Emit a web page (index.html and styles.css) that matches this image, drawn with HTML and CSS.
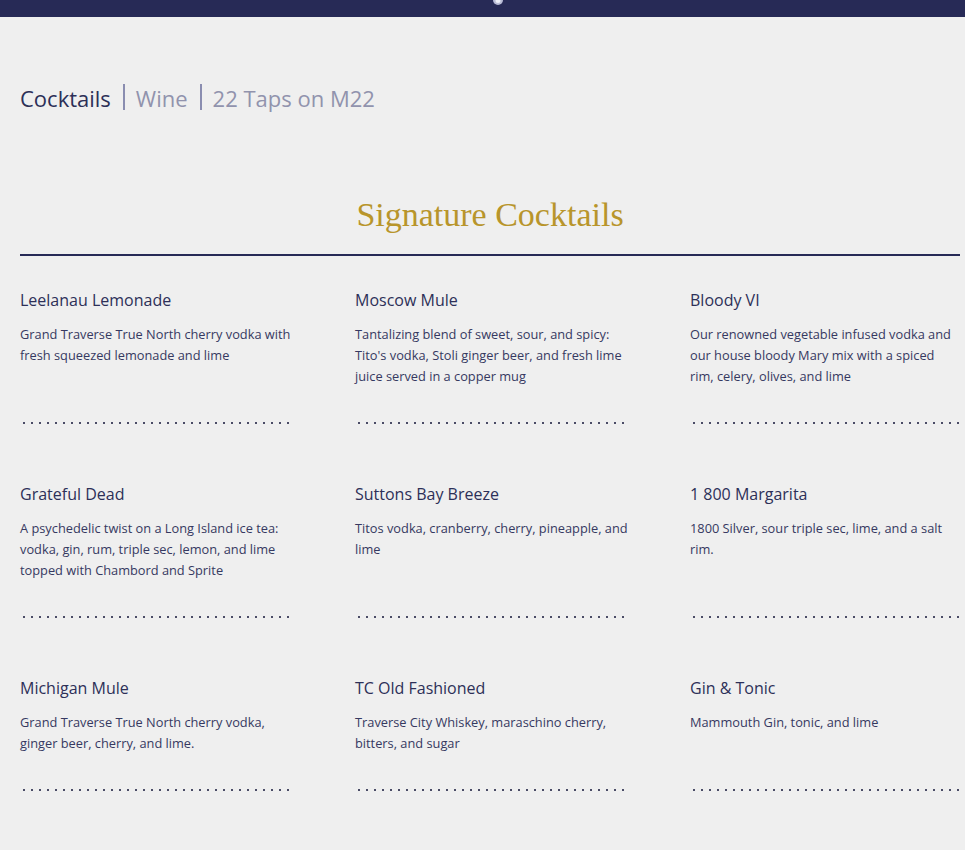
FILE: index.html
```html
<!DOCTYPE html>
<html>
<head>
<meta charset="utf-8">
<link rel="stylesheet" href="styles.css">
</head>
<body>
<header class="topbar">
  <svg class="logo" width="20" height="12" viewBox="0 0 20 12"><ellipse cx="10" cy="0" rx="5" ry="5" fill="#b9bcd6"/><ellipse cx="10" cy="1" rx="2.5" ry="2" fill="#eef0f8"/></svg>
</header>
<main class="page">
  <nav class="tabs">
    <span class="tab active">Cocktails</span>
    <span class="sep"></span>
    <span class="tab">Wine</span>
    <span class="sep"></span>
    <span class="tab">22 Taps on M22</span>
  </nav>
  <h1 class="section-title">Signature Cocktails</h1>
  <div class="menu">
    <div class="item"><h2>Leelanau Lemonade</h2><p>Grand Traverse True North cherry vodka with fresh squeezed lemonade and lime</p><div class="dots"></div></div>
    <div class="item"><h2>Moscow Mule</h2><p>Tantalizing blend of sweet, sour, and spicy: Tito's vodka, Stoli ginger beer, and fresh lime juice served in a copper mug</p><div class="dots"></div></div>
    <div class="item"><h2>Bloody VI</h2><p>Our renowned vegetable infused vodka and our house bloody Mary mix with a spiced rim, celery, olives, and lime</p><div class="dots"></div></div>
    <div class="item"><h2>Grateful Dead</h2><p>A psychedelic twist on a Long Island ice tea: vodka, gin, rum, triple sec, lemon, and lime topped with Chambord and Sprite</p><div class="dots"></div></div>
    <div class="item"><h2>Suttons Bay Breeze</h2><p>Titos vodka, cranberry, cherry, pineapple, and lime</p><div class="dots"></div></div>
    <div class="item"><h2>1 800 Margarita</h2><p>1800 Silver, sour triple sec, lime, and a salt rim.</p><div class="dots"></div></div>
    <div class="item"><h2>Michigan Mule</h2><p>Grand Traverse True North cherry vodka, ginger beer, cherry, and lime.</p><div class="dots"></div></div>
    <div class="item"><h2>TC Old Fashioned</h2><p>Traverse City Whiskey, maraschino cherry, bitters, and sugar</p><div class="dots"></div></div>
    <div class="item"><h2>Gin &amp; Tonic</h2><p>Mammouth Gin, tonic, and lime</p><div class="dots"></div></div>
  </div>
</main>
</body>
</html>
```
FILE: styles.css
```css
* { box-sizing: border-box; }
html, body { margin: 0; padding: 0; }
body {
  background: #efefef;
  font-family: "Open Sans", "Liberation Sans", sans-serif;
  color: #2d3058;
}
.topbar {
  height: 17px;
  background: #272a56;
  display: flex;
  justify-content: center;
  overflow: hidden;
}
.logo { margin-left: 30px; display: block; }
.page {
  padding: 0 5px 0 20px;
}
.tabs {
  margin-top: 66px;
  display: flex;
  align-items: center;
  font-size: 22px;
  line-height: 30px;
  color: #9193ad;
}
.tab.active { color: #2c2f57; }
.sep {
  display: inline-block;
  width: 2px;
  height: 26px;
  background: #8a8db0;
  margin: 0 11px 0 12px;
  position: relative;
  top: -1px;
}
.section-title {
  margin: 83px 0 0 0;
  font-family: "Liberation Serif", "Times New Roman", serif;
  font-weight: normal;
  font-size: 34px;
  line-height: 38px;
  color: #b8952b;
  text-align: center;
  padding-bottom: 20px;
  border-bottom: 2px solid #272a56;
}
.menu {
  margin-top: 33px;
  display: grid;
  grid-template-columns: 274px 274px 265px;
  column-gap: 61px;
  row-gap: 59px;
}
.item {
  display: flex;
  flex-direction: column;
}
.item h2 {
  margin: 0;
  font-weight: normal;
  font-size: 16px;
  line-height: 22px;
  color: #2d3058;
}
.item p {
  margin: 13px 0 35px 0;
  font-size: 12.8px;
  line-height: 21px;
  color: #363961;
}
.dots {
  margin-top: auto;
  height: 2px;
  width: 272px;
  background-image: radial-gradient(circle, #4a4c66 0.9px, transparent 1.3px);
  background-size: 8px 2px;
  background-repeat: repeat-x;
  background-position: 0 0;
}
```
